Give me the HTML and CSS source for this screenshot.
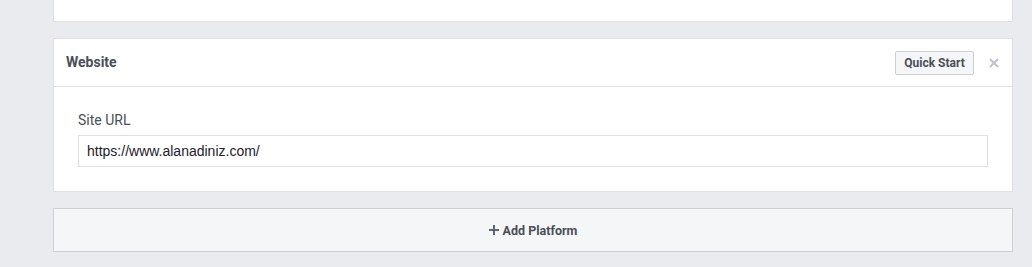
FILE: index.html
```html
<!DOCTYPE html>
<html>
<head>
<meta charset="utf-8">
<link rel="stylesheet" href="styles.css">
</head>
<body>
<div class="page">
  <div class="card card-top"></div>
  <div class="card">
    <div class="card-header">
      <div class="card-title">Website</div>
      <div class="header-actions">
        <button class="btn">Quick Start</button>
        <span class="close" aria-label="close">
          <svg width="10" height="10" viewBox="0 0 10 10"><path d="M1 1L9 9M9 1L1 9" stroke="#bec2c9" stroke-width="2"/></svg>
        </span>
      </div>
    </div>
    <div class="card-body">
      <label class="field-label">Site URL</label>
      <div class="input">https://www.alanadiniz.com/</div>
    </div>
  </div>
  <div class="add-platform">
    <svg width="10" height="10" viewBox="0 0 10 10"><path d="M5 0V10M0 5H10" stroke="#606770" stroke-width="2"/></svg>
    <span>Add Platform</span>
  </div>
</div>
</body>
</html>
```

FILE: styles.css
```css
html, body {
  margin: 0;
  padding: 0;
  background: #e9ebee;
  font-family: Roboto, "Liberation Sans", Arial, sans-serif;
  color: #4b4f56;
}
.page {
  width: 960px;
  margin-left: 53px;
  display: flex;
  flex-direction: column;
  gap: 16px;
}
.card {
  background: #fff;
  border: 1px solid #dddfe2;
}
.card-top {
  height: 21px;
  border-top: none;
}
.card-header {
  height: 47px;
  border-bottom: 1px solid #dddfe2;
  display: flex;
  align-items: center;
  justify-content: space-between;
  padding: 0 13px 0 12px;
}
.card-title {
  font-size: 14px;
  font-weight: bold;
  color: #4b4f56;
  padding-bottom: 2px;
}
.header-actions {
  display: flex;
  align-items: center;
  gap: 15px;
}
.btn {
  height: 24px;
  width: 79px;
  padding: 0;
  background: #f5f6f7;
  border: 1px solid #ccd0d5;
  border-radius: 2px;
  font-family: Roboto, "Liberation Sans", Arial, sans-serif;
  font-size: 12px;
  font-weight: bold;
  color: #4b4f56;
}
.close {
  display: flex;
  width: 10px;
  height: 10px;
}
.card-body {
  padding: 24px;
  display: flex;
  flex-direction: column;
}
.field-label {
  font-size: 14px;
  line-height: 18px;
  color: #4b4f56;
  margin-bottom: 6px;
}
.input {
  height: 30px;
  border: 1px solid #dddfe2;
  display: flex;
  align-items: center;
  padding: 0 8px;
  font-family: "Liberation Sans", Arial, sans-serif;
  font-size: 14px;
  color: #1d2129;
}
.add-platform {
  height: 42px;
  background: #f5f6f7;
  border: 1px solid #ccd0d5;
  display: flex;
  align-items: center;
  justify-content: center;
  gap: 4px;
  font-size: 12.5px;
  font-weight: bold;
  color: #4b4f56;
}
```
